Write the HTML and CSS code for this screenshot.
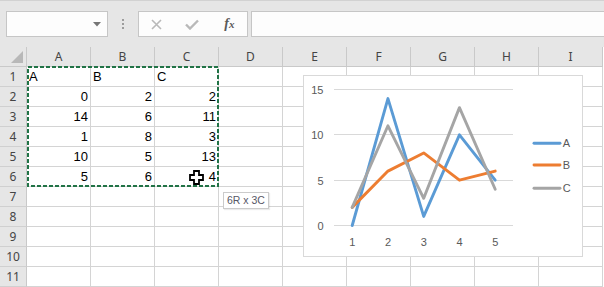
FILE: index.html
```html
<!DOCTYPE html>
<html>
<head>
<meta charset="utf-8">
<link rel="stylesheet" href="styles.css">
</head>
<body>
<div class="app">
  <div class="toolbar">
    <div class="namebox">
      <svg class="dd" width="8" height="5" viewBox="0 0 8 5"><path d="M0 0H8L4 4.5Z" fill="#767676"/></svg>
    </div>
    <div class="grip"><i></i><i></i><i></i></div>
    <div class="fbtns">
      <span class="fb"><svg width="11" height="11" viewBox="0 0 11 11"><path d="M1 1L10 10M10 1L1 10" stroke="#b9b9b9" stroke-width="1.6"/></svg></span>
      <span class="fb"><svg width="14" height="11" viewBox="0 0 14 11"><path d="M1 5.5L5 9.5L13 1.5" stroke="#b9b9b9" stroke-width="2.4" fill="none"/></svg></span>
      <span class="fb fx">f<span class="x">x</span></span>
    </div>
    <div class="fbar"></div>
  </div>

  <div class="sheet">
    <div class="h corner"><span class="tri"></span></div>
    <div class="h">A</div><div class="h">B</div><div class="h">C</div><div class="h">D</div><div class="h">E</div><div class="h">F</div><div class="h">G</div><div class="h">H</div><div class="h">I</div>

    <div class="r">1</div>
    <div class="c">A</div><div class="c">B</div><div class="c">C</div><div class="c"></div><div class="c"></div><div class="c"></div><div class="c"></div><div class="c"></div><div class="c"></div>

    <div class="r">2</div>
    <div class="c n">0</div><div class="c n">2</div><div class="c n">2</div><div class="c"></div><div class="c"></div><div class="c"></div><div class="c"></div><div class="c"></div><div class="c"></div>

    <div class="r">3</div>
    <div class="c n">14</div><div class="c n">6</div><div class="c n">11</div><div class="c"></div><div class="c"></div><div class="c"></div><div class="c"></div><div class="c"></div><div class="c"></div>

    <div class="r">4</div>
    <div class="c n">1</div><div class="c n">8</div><div class="c n">3</div><div class="c"></div><div class="c"></div><div class="c"></div><div class="c"></div><div class="c"></div><div class="c"></div>

    <div class="r">5</div>
    <div class="c n">10</div><div class="c n">5</div><div class="c n">13</div><div class="c"></div><div class="c"></div><div class="c"></div><div class="c"></div><div class="c"></div><div class="c"></div>

    <div class="r">6</div>
    <div class="c n">5</div><div class="c n">6</div><div class="c n">4</div><div class="c"></div><div class="c"></div><div class="c"></div><div class="c"></div><div class="c"></div><div class="c"></div>

    <div class="r">7</div>
    <div class="c"></div><div class="c"></div><div class="c"></div><div class="c"></div><div class="c"></div><div class="c"></div><div class="c"></div><div class="c"></div><div class="c"></div>

    <div class="r">8</div>
    <div class="c"></div><div class="c"></div><div class="c"></div><div class="c"></div><div class="c"></div><div class="c"></div><div class="c"></div><div class="c"></div><div class="c"></div>

    <div class="r">9</div>
    <div class="c"></div><div class="c"></div><div class="c"></div><div class="c"></div><div class="c"></div><div class="c"></div><div class="c"></div><div class="c"></div><div class="c"></div>

    <div class="r">10</div>
    <div class="c"></div><div class="c"></div><div class="c"></div><div class="c"></div><div class="c"></div><div class="c"></div><div class="c"></div><div class="c"></div><div class="c"></div>

    <div class="r">11</div>
    <div class="c"></div><div class="c"></div><div class="c"></div><div class="c"></div><div class="c"></div><div class="c"></div><div class="c"></div><div class="c"></div><div class="c"></div>

    <svg class="marquee" width="192" height="121" viewBox="0 0 192 121">
      <rect x="1" y="1" width="190" height="119" fill="none" stroke="#217346" stroke-width="2" stroke-dasharray="4 2"/>
    </svg>

    <svg class="cursor" width="15" height="15" viewBox="0 0 15 15">
      <path d="M5 1H10V5H14V10H10V14H5V10H1V5H5Z" fill="#fff" stroke="#000" stroke-width="1.8" stroke-linejoin="miter"/>
    </svg>

    <div class="tip">6R x 3C</div>

    <div class="chart">
      <svg width="280" height="182" viewBox="0 0 280 182">
        <g stroke="#d9d9d9" stroke-width="1">
          <line x1="31" y1="14.5" x2="210" y2="14.5"/>
          <line x1="31" y1="59.5" x2="210" y2="59.5"/>
          <line x1="31" y1="105.5" x2="210" y2="105.5"/>
          <line x1="31" y1="150.5" x2="210" y2="150.5"/>
        </g>
        <g class="ax" text-anchor="end">
          <text x="20.5" y="18.5">15</text>
          <text x="20.5" y="63.5">10</text>
          <text x="20.5" y="109.5">5</text>
          <text x="20.5" y="154.5">0</text>
        </g>
        <g class="ax" text-anchor="middle">
          <text x="49.2" y="170.5">1</text>
          <text x="84.95" y="170.5">2</text>
          <text x="120.7" y="170.5">3</text>
          <text x="156.45" y="170.5">4</text>
          <text x="192.2" y="170.5">5</text>
        </g>
        <g fill="none" stroke-width="2.9" stroke-linejoin="round" stroke-linecap="round">
          <polyline stroke="#5b9bd5" points="49.2,150.5 84.95,23.57 120.7,141.43 156.45,59.83 192.2,105.17"/>
          <polyline stroke="#ed7d31" points="49.2,132.37 84.95,96.1 120.7,77.97 156.45,105.17 192.2,96.1"/>
          <polyline stroke="#a5a5a5" points="49.2,132.37 84.95,50.77 120.7,123.3 156.45,32.63 192.2,114.23"/>
        </g>
        <g stroke-width="2.9" stroke-linecap="round">
          <line x1="231" y1="68.3" x2="257" y2="68.3" stroke="#5b9bd5"/>
          <line x1="231" y1="90" x2="257" y2="90" stroke="#ed7d31"/>
          <line x1="231" y1="113.3" x2="257" y2="113.3" stroke="#a5a5a5"/>
        </g>
        <g class="ax">
          <text x="259.7" y="72.3">A</text>
          <text x="259.7" y="94">B</text>
          <text x="259.7" y="117.3">C</text>
        </g>
      </svg>
    </div>
  </div>
</div>
</body>
</html>
```

FILE: styles.css
```css
html, body {
  margin: 0;
  padding: 0;
  background: #fff;
}
.app {
  width: 604px;
  height: 287px;
  overflow: hidden;
  position: relative;
}
.toolbar {
  height: 47px;
  box-sizing: border-box;
  background: #e6e6e6;
  border-top: 1px solid #d2d2d2;
  padding-top: 10px;
  display: flex;
  align-items: flex-start;
}
.namebox {
  margin-left: 6px;
  width: 102px;
  height: 26px;
  box-sizing: border-box;
  background: #fdfdfd;
  border: 1px solid #c6c6c6;
  display: flex;
  align-items: center;
  justify-content: flex-end;
  padding-right: 6px;
}
.dd {
  display: block;
  margin-top: 1px;
}
.grip {
  width: 30px;
  height: 26px;
  display: flex;
  flex-direction: column;
  align-items: center;
  justify-content: center;
  gap: 2px;
}
.grip i {
  display: block;
  width: 2px;
  height: 2px;
  background: #9c9c9c;
}
.fbtns {
  width: 110px;
  height: 26px;
  box-sizing: border-box;
  background: #fdfdfd;
  border: 1px solid #c6c6c6;
  display: flex;
  padding-left: 0;
}
.fb {
  width: 36px;
  height: 24px;
  display: flex;
  align-items: center;
  justify-content: center;
}
.fb svg {
  display: block;
}
.fx {
  font-family: "Liberation Serif", serif;
  font-style: italic;
  font-weight: bold;
  font-size: 14px;
  color: #5a5a5a;
  padding-left: 2px;
}
.fx .x {
  font-size: 11px;
}
.fbar {
  margin-left: 3px;
  flex: 1;
  height: 26px;
  box-sizing: border-box;
  background: #fdfdfd;
  border: 1px solid #c6c6c6;
  border-right: none;
}
.sheet {
  position: relative;
  display: grid;
  grid-template-columns: 27px repeat(9, 64px);
  grid-template-rows: repeat(12, 20px);
}
.c {
  box-sizing: border-box;
  background: #fff;
  border-right: 1px solid #d4d4d4;
  border-bottom: 1px solid #d4d4d4;
  font-family: "Liberation Sans", Arial, sans-serif;
  font-size: 13px;
  line-height: 19px;
  padding: 0 2px 0 2px;
  color: #000;
  white-space: nowrap;
}
.n {
  text-align: right;
}
.h, .r {
  box-sizing: border-box;
  background: #e6e6e6;
  border-right: 1px solid #c9c9c9;
  border-bottom: 1px solid #c9c9c9;
  font-family: "Noto Sans", "Liberation Sans", sans-serif;
  font-size: 12px;
  line-height: 19px;
  color: #444;
  text-align: center;
}
.r {
  border-bottom-color: #d0d0d0;
}
.corner {
  position: relative;
}
.tri {
  position: absolute;
  left: 11px;
  top: 4px;
  width: 0;
  height: 0;
  border-left: 12px solid transparent;
  border-bottom: 12px solid #b8b8b8;
}
.marquee {
  position: absolute;
  left: 27px;
  top: 19px;
}
.cursor {
  position: absolute;
  left: 189px;
  top: 123px;
}
.tip {
  position: absolute;
  left: 223px;
  top: 145px;
  height: 17px;
  box-sizing: border-box;
  padding: 0 3px;
  background: #fff;
  border: 1px solid #cbcbcb;
  box-shadow: 1px 1px 1px rgba(0,0,0,0.08);
  font-family: "Liberation Sans", Arial, sans-serif;
  font-size: 10.5px;
  line-height: 15px;
  color: #575766;
  white-space: nowrap;
}
.chart {
  position: absolute;
  left: 303px;
  top: 28px;
  width: 280px;
  height: 182px;
  box-sizing: border-box;
  background: #fff;
  border: 1px solid #d9d9d9;
}
.chart svg {
  display: block;
  position: absolute;
  left: -1px;
  top: -1px;
}
.ax text {
  font-family: "Liberation Sans", Arial, sans-serif;
  font-size: 11px;
  fill: #595959;
}
```
